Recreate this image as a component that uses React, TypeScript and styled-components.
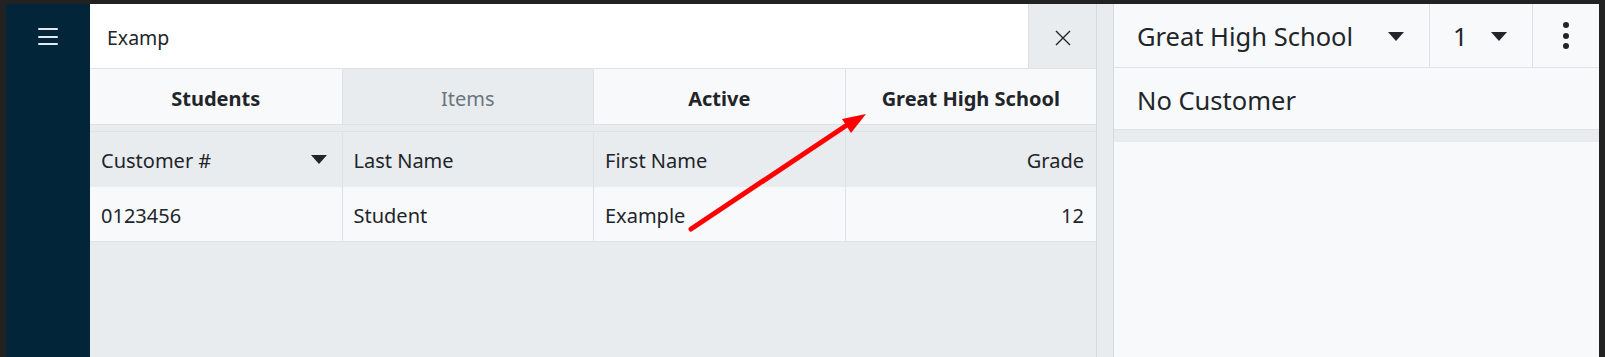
import React from "react";
import styled, { createGlobalStyle } from "styled-components";

const GlobalStyle = createGlobalStyle`
  html, body {
    margin: 0;
    padding: 0;
    background: #222222;
    font-family: "Noto Sans", "Open Sans", sans-serif;
    color: #212529;
  }
  * {
    box-sizing: border-box;
  }
`;

const columns = [
  { key: "id", label: "Customer #", sort: true },
  { key: "last", label: "Last Name" },
  { key: "first", label: "First Name" },
  { key: "grade", label: "Grade", right: true },
];

const rows = [{ id: "0123456", last: "Student", first: "Example", grade: "12" }];

const tabs = [
  { label: "Students" },
  { label: "Items", muted: true },
  { label: "Active" },
  { label: "Great High School" },
];

const Caret = () => (
  <svg width="16" height="9" viewBox="0 0 16 9">
    <path d="M0 0 L16 0 L8 9 Z" fill="#212529" />
  </svg>
);

const App: React.FC = () => {
  return (
    <>
      <GlobalStyle />
      <Frame>
        <Sidebar>
          <Burger>
            <span />
            <span />
            <span />
          </Burger>
        </Sidebar>
        <Workspace>
          <LeftPanel>
            <SearchRow>
              <SearchInput defaultValue="Examp" />
              <CloseButton aria-label="clear">
                <svg width="16" height="16" viewBox="0 0 16 16">
                  <path d="M1 1 L15 15 M15 1 L1 15" stroke="#212529" strokeWidth="1.4" />
                </svg>
              </CloseButton>
            </SearchRow>
            <Tabs>
              {tabs.map((t) => (
                <Tab key={t.label} $muted={t.muted}>
                  {t.label}
                </Tab>
              ))}
            </Tabs>
            <Table>
              {columns.map((c) => (
                <HeadCell key={c.key} $right={c.right}>
                  <span>{c.label}</span>
                  {c.sort && <Caret />}
                </HeadCell>
              ))}
              {rows.map((r) =>
                columns.map((c) => (
                  <Cell key={r.id + c.key} $right={c.right}>
                    {r[c.key as keyof typeof r]}
                  </Cell>
                ))
              )}
            </Table>
          </LeftPanel>
          <RightPanel>
            <TopBar>
              <Select $grow>
                <span>Great High School</span>
                <Caret />
              </Select>
              <Select>
                <span>1</span>
                <Caret />
              </Select>
              <MenuButton aria-label="more">
                <i />
                <i />
                <i />
              </MenuButton>
            </TopBar>
            <CustomerRow>No Customer</CustomerRow>
            <DetailPane />
          </RightPanel>
        </Workspace>
        <Annotation width="1605" height="357" viewBox="0 0 1605 357">
          <line
            x1="691"
            y1="229"
            x2="850"
            y2="123"
            stroke="#ff0000"
            strokeWidth="5"
            strokeLinecap="round"
          />
          <polygon points="866,114 842,119 851,133" fill="#ff0000" />
        </Annotation>
      </Frame>
    </>
  );
};

const Frame = styled.div`
  position: relative;
  display: flex;
  height: 357px;
  padding: 4px 6px 0 6px;
  overflow: hidden;
`;

const Sidebar = styled.nav`
  width: 84px;
  flex-shrink: 0;
  background: #022539;
  display: flex;
  justify-content: center;
  padding-top: 24px;
`;

const Burger = styled.div`
  display: flex;
  flex-direction: column;
  gap: 5.7px;
  width: 20px;

  span {
    display: block;
    height: 2px;
    background: #e6e9ec;
    border-radius: 1px;
  }
`;

const Workspace = styled.div`
  flex: 1;
  display: flex;
  background: #e9ecef;
`;

const LeftPanel = styled.section`
  width: 1007px;
  flex-shrink: 0;
  border-right: 1px solid #d6dadf;
  display: flex;
  flex-direction: column;
`;

const SearchRow = styled.div`
  display: flex;
  height: 65px;
  border-bottom: 1px solid #dee2e6;
`;

const SearchInput = styled.input`
  flex: 1;
  border: none;
  outline: none;
  background: #ffffff;
  padding: 3px 17px 0;
  font-family: inherit;
  font-size: 19.5px;
  color: #212529;
`;

const CloseButton = styled.button`
  width: 68px;
  border: none;
  border-left: 1px solid #dee2e6;
  background: #e9ecef;
  display: flex;
  align-items: center;
  justify-content: center;
  padding: 4px 0 0 0;
`;

const Tabs = styled.div`
  display: grid;
  grid-template-columns: repeat(4, 1fr);
  height: 56px;
  border-bottom: 1px solid #dee2e6;
  margin-bottom: 6px;
`;

const Tab = styled.div<{ $muted?: boolean }>`
  display: flex;
  align-items: center;
  justify-content: center;
  font-size: 20px;
  font-weight: ${(p) => (p.$muted ? 400 : 700)};
  color: ${(p) => (p.$muted ? "#6c757d" : "#212529")};
  background: ${(p) => (p.$muted ? "#e9ecef" : "#f8f9fa")};
  padding-top: 3px;

  & + & {
    border-left: 1px solid #dee2e6;
  }
`;

const Table = styled.div`
  display: grid;
  grid-template-columns: repeat(4, 1fr);
  grid-auto-rows: 55px;
  border-top: 1px solid #dee2e6;

  & > div:not(:nth-child(4n + 1)) {
    border-left: 1px solid #dee2e6;
  }
`;

const HeadCell = styled.div<{ $right?: boolean }>`
  display: flex;
  align-items: center;
  justify-content: ${(p) => (p.$right ? "flex-end" : "space-between")};
  padding: 2px ${(p) => (p.$right ? "12px" : "15px")} 0 11px;
  background: #e9ecef;
  font-size: 20px;

  svg {
    margin-top: -3px;
  }
`;

const Cell = styled.div<{ $right?: boolean }>`
  display: flex;
  align-items: center;
  justify-content: ${(p) => (p.$right ? "flex-end" : "flex-start")};
  padding: 3px 12px 0 11px;
  background: #f8f9fa;
  font-size: 20px;
  border-bottom: 1px solid #dee2e6;
`;

const RightPanel = styled.section`
  margin-left: 16px;
  flex: 1;
  border-left: 1px solid #d6dadf;
  display: flex;
  flex-direction: column;
`;

const TopBar = styled.div`
  display: flex;
  height: 64px;
  background: #f8f9fa;
  border-bottom: 1px solid #dee2e6;
`;

const Select = styled.div<{ $grow?: boolean }>`
  display: flex;
  align-items: center;
  justify-content: space-between;
  width: ${(p) => (p.$grow ? "316px" : "103px")};
  padding: 0 25px 0 23px;
  border-right: 1px solid #dee2e6;
  font-size: 25.5px;

  svg {
    margin-top: 2px;
  }
`;

const MenuButton = styled.div`
  flex: 1;
  display: flex;
  flex-direction: column;
  align-items: center;
  justify-content: center;
  gap: 4.7px;

  i {
    display: block;
    width: 6px;
    height: 6px;
    border-radius: 50%;
    background: #212529;
  }
`;

const CustomerRow = styled.div`
  height: 62px;
  display: flex;
  align-items: center;
  padding: 2px 23px 0;
  background: #f8f9fa;
  border-bottom: 1px solid #dee2e6;
  font-size: 25.5px;
`;

const DetailPane = styled.div`
  flex: 1;
  margin-top: 12px;
  background: #f8f9fa;
`;

const Annotation = styled.svg`
  position: absolute;
  left: 0;
  top: 0;
  pointer-events: none;
`;

export default App;
